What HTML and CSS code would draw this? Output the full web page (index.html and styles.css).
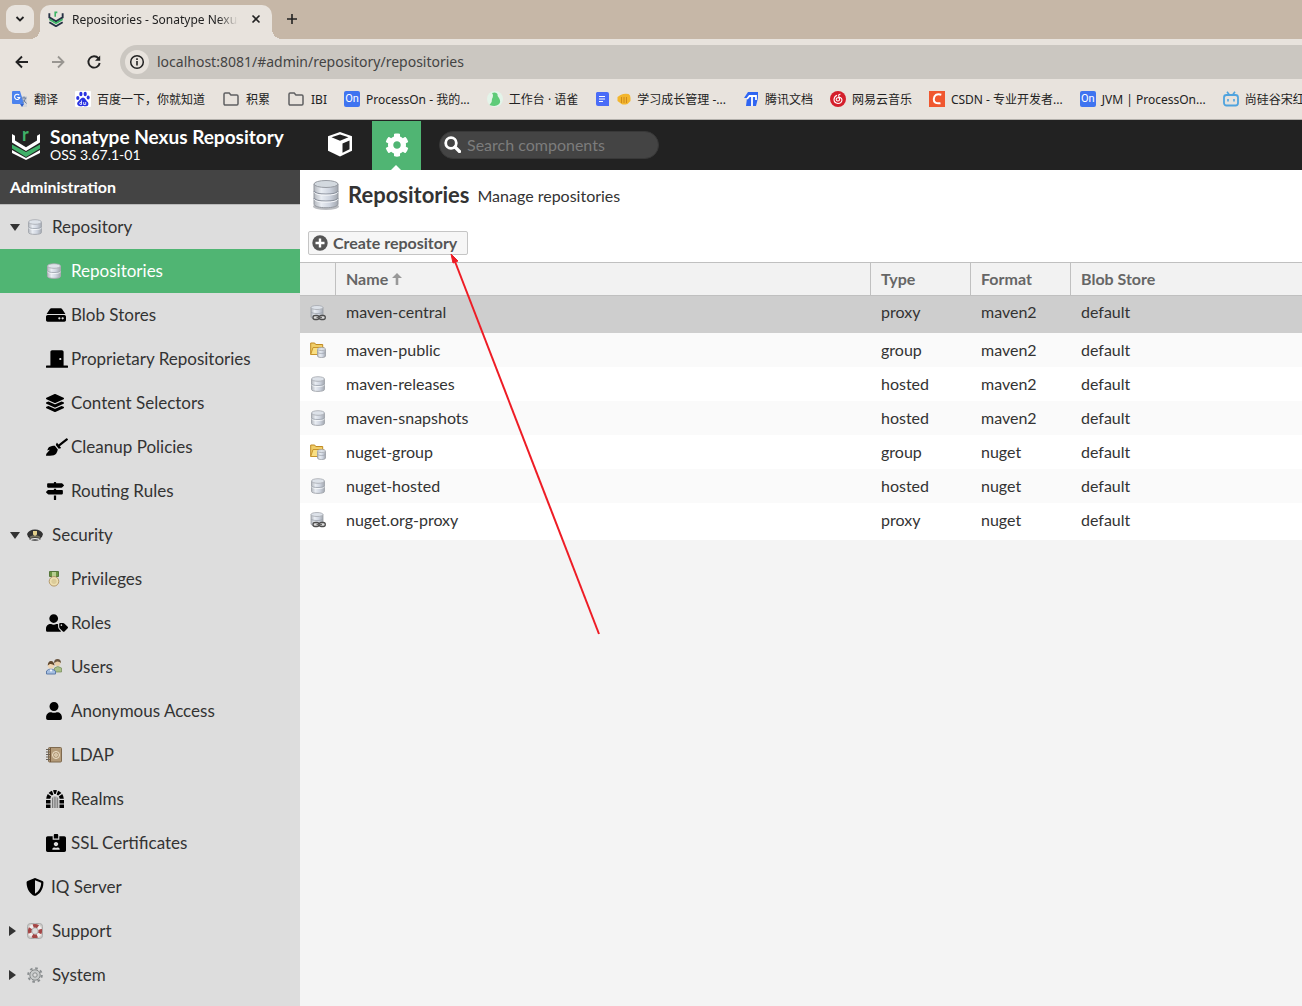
FILE: index.html
```html
<!DOCTYPE html>
<html lang="en">
<head>
<meta charset="utf-8">
<title>Repositories - Sonatype Nexus Repository</title>
<link rel="stylesheet" href="styles.css">
</head>
<body>
<svg class="sprite" aria-hidden="true">
  <defs>
    <linearGradient id="metal" x1="0" x2="1" y1="0" y2="0"><stop offset="0" stop-color="#b4b8be"/><stop offset=".3" stop-color="#e9edf3"/><stop offset=".65" stop-color="#ced4df"/><stop offset="1" stop-color="#a3a8b0"/></linearGradient>
    <symbol id="db" viewBox="0 0 16 16">
      <path d="M1.500 3v10.500c0 2.500 13 2.500 13 0V3" fill="url(#metal)" stroke="#a6aab0"/>
      <path d="M1.500 8.900c1 2 12 2 13 0" fill="none" stroke="#f7f9fb"/>
      <path d="M1.500 8c1 2 12 2 13 0" fill="none" stroke="#9ba1ab" stroke-width=".8"/>
      <ellipse cx="8" cy="3" rx="6.500" ry="2.300" fill="#dde2e9" stroke="#a4a8ae" stroke-width=".8"/>
    </symbol>
    <symbol id="db-proxy" viewBox="0 0 16 16">
      <path d="M1 2.500v9.500c0 2.500 12 2.500 12 0V2.500" fill="url(#metal)" stroke="#9a9ea5" stroke-width=".8"/>
      <path d="M1 7c1 2 11 2 12 0" fill="none" stroke="#9ba1ab" stroke-width=".8"/>
      <ellipse cx="7" cy="2.500" rx="6" ry="2" fill="#dde2e9" stroke="#a4a8ae" stroke-width=".8"/>
      <rect x="3" y="10.500" width="6" height="4" rx="2" fill="#ddd" stroke="#4c4c4c" stroke-width="1.300"/>
      <rect x="9.300" y="10.500" width="6" height="4" rx="2" fill="#ddd" stroke="#4c4c4c" stroke-width="1.300"/>
      <path d="M6.500 12.500h5.500" stroke="#666" stroke-width="1.300"/>
    </symbol>
    <symbol id="db-group" viewBox="0 0 16 16">
      <path d="M.700 12.500V1h4l1 1.500h7V6" fill="#f0cd68" stroke="#c08a22"/>
      <path d="M.700 12.500L3 5.500h11l-2 7z" fill="#f9df83" stroke="#c8952c"/>
      <path d="M7.500 7v7c0 2 8 2 8 0V7" fill="url(#metal)" stroke="#9a9ea5" stroke-width=".8"/>
      <ellipse cx="11.500" cy="7" rx="4" ry="1.500" fill="#dde2e9" stroke="#a4a8ae" stroke-width=".8"/>
      <path d="M7.500 10.500c1 1.300 7 1.300 8 0" fill="none" stroke="#9ba1ab" stroke-width=".7"/>
    </symbol>
    <symbol id="db-large" viewBox="0 0 28 32">
      <ellipse cx="14" cy="27.500" rx="13" ry="3.500" fill="#8d9197" opacity=".6"/>
      <path d="M2 5v20c0 5 24 5 24 0V5" fill="url(#metal)" stroke="#94989f"/>
      <path d="M2 12c1 4 23 4 24 0M2 19c1 4 23 4 24 0" fill="none" stroke="#8f95a0" stroke-width="1.200"/>
      <path d="M2 13.200c1 4 23 4 24 0M2 20.200c1 4 23 4 24 0" fill="none" stroke="#f5f7fa"/>
      <ellipse cx="14" cy="5" rx="12" ry="3.500" fill="#d3d9df" stroke="#989ca3"/>
    </symbol>
    <symbol id="hdd" viewBox="0 0 576 512"><path d="M576 304v96c0 26.510-21.490 48-48 48H48c-26.510 0-48-21.490-48-48v-96c0-26.510 21.490-48 48-48h480c26.510 0 48 21.490 48 48zm-48-80a79.557 79.557 0 0 1 30.777 6.165L462.250 85.374A48.003 48.003 0 0 0 422.311 64H153.689a48 48 0 0 0-39.938 21.374L17.223 230.165A79.557 79.557 0 0 1 48 224h480zm-48 96c-17.673 0-32 14.327-32 32s14.327 32 32 32 32-14.327 32-32-14.327-32-32-32zm-96 0c-17.673 0-32 14.327-32 32s14.327 32 32 32 32-14.327 32-32-14.327-32-32-32z"/></symbol>
    <symbol id="door" viewBox="0 0 640 512"><path d="M624 448H512V50.800C512 22.780 490.470 0 464 0H175.990c-26.470 0-48 22.780-48 50.800V448H16c-8.840 0-16 7.160-16 16v32c0 8.840 7.160 16 16 16h608c8.840 0 16-7.160 16-16v-32c0-8.840-7.160-16-16-16zM415.990 288c-17.670 0-32-14.330-32-32s14.330-32 32-32 32 14.330 32 32c.010 17.670-14.320 32-32 32z"/></symbol>
    <symbol id="layers" viewBox="0 0 512 512"><path d="M12.410 148.020l232.940 105.670c6.800 3.090 14.490 3.090 21.290 0l232.940-105.670c16.550-7.510 16.550-32.520 0-40.030L266.650 2.310a25.607 25.607 0 0 0-21.290 0L12.410 107.980c-16.550 7.510-16.550 32.530 0 40.040zm487.180 88.280l-58.090-26.330-161.640 73.270c-7.560 3.430-15.590 5.170-23.860 5.170s-16.290-1.740-23.860-5.170L70.510 209.970l-58.100 26.330c-16.550 7.500-16.550 32.500 0 40l232.940 105.590c6.800 3.080 14.490 3.080 21.290 0L499.590 276.300c16.550-7.500 16.550-32.500 0-40zm0 127.800l-57.870-26.230-161.860 73.370c-7.560 3.430-15.590 5.170-23.860 5.170s-16.290-1.740-23.860-5.170L70.290 337.870 12.410 364.100c-16.550 7.500-16.550 32.500 0 40l232.940 105.590c6.800 3.080 14.490 3.080 21.290 0L499.590 404.100c16.550-7.500 16.550-32.500 0-40z"/></symbol>
    <symbol id="broom" viewBox="0 0 640 512"><path d="M256.470 216.770l86.730 109.180s-16.600 102.360-76.570 150.120C206.660 523.850 0 510.190 0 510.190s3.800-23.140 11-55.430l94.620-112.170c3.970-4.700-.870-11.620-6.650-9.500l-60.400 22.090c14.440-41.660 32.720-80.040 54.600-97.470 59.970-47.760 163.300-40.940 163.300-40.940zM636.530 31.030l-19.860-25c-5.490-6.900-15.520-8.050-22.410-2.560l-232.480 177.800-34.140-42.970c-5.090-6.410-15.140-5.210-18.590 2.210l-25.330 54.550 86.730 109.180 58.800-12.450c8-1.690 11.420-11.200 6.340-17.600l-34.090-42.920 232.480-177.800c6.890-5.480 8.040-15.530 2.550-22.440z"/></symbol>
    <symbol id="signs" viewBox="0 0 512 512"><path d="M507.310 84.690L464 41.370c-6-6-14.140-9.370-22.630-9.370H288V16c0-8.840-7.160-16-16-16h-32c-8.840 0-16 7.160-16 16v16H56c-13.250 0-24 10.750-24 24v80c0 13.250 10.750 24 24 24h385.370c8.490 0 16.620-3.370 22.630-9.370l43.310-43.310c6.250-6.260 6.250-16.380 0-22.630zM224 496c0 8.840 7.160 16 16 16h32c8.840 0 16-7.160 16-16V384h-64v112zm232-272H288v-32h-64v32H70.630c-8.490 0-16.620 3.370-22.630 9.370L4.690 276.690c-6.250 6.250-6.250 16.380 0 22.630L48 342.630c6 6 14.140 9.370 22.630 9.370H456c13.250 0 24-10.750 24-24v-80c0-13.250-10.750-24-24-24z"/></symbol>
    <symbol id="user" viewBox="0 0 448 512"><path d="M224 256c70.700 0 128-57.300 128-128S294.700 0 224 0 96 57.300 96 128s57.300 128 128 128zm89.600 32h-16.700c-22.200 10.200-46.900 16-72.900 16s-50.600-5.800-72.900-16h-16.700C60.200 288 0 348.200 0 422.400V464c0 26.500 21.500 48 48 48h352c26.500 0 48-21.500 48-48v-41.600c0-74.200-60.200-134.400-134.400-134.400z"/></symbol>
    <symbol id="user-tag" viewBox="0 0 640 512"><path d="M630.600 364.900l-90.300-90.200c-12-12-28.300-18.700-45.300-18.700h-79.300c-17.700 0-32 14.300-32 32v79.200c0 17 6.700 33.200 18.700 45.200l90.300 90.200c12.500 12.500 32.800 12.500 45.300 0l92.500-92.500c12.600-12.500 12.600-32.700.100-45.200zm-182.800-21c-13.300 0-24-10.700-24-24s10.700-24 24-24 24 10.700 24 24c0 13.200-10.700 24-24 24zm-223.800-88c70.700 0 128-57.300 128-128C352 57.300 294.700 0 224 0S96 57.300 96 128c0 70.600 57.300 127.900 128 127.900zm127.800 111.200V294c-12.200-3.600-24.900-6.200-38.200-6.200h-16.700c-22.200 10.200-46.900 16-72.900 16s-50.600-5.800-72.900-16h-16.700c-74.200 0-134.400 60.200-134.400 134.400V464c0 26.500 21.500 48 48 48h352c15.500 0 29.100-7.500 37.900-18.900l-58-58c-18.100-18.100-28.100-42.200-28.100-67.900z"/></symbol>
    <symbol id="shield" viewBox="0 0 512 512"><path d="M466.500 83.700l-192-80a48.150 48.150 0 0 0-36.900 0l-192 80C27.700 91.100 16 108.600 16 128c0 198.500 114.500 335.700 221.500 380.300 11.800 4.900 25.100 4.900 36.900 0C360.100 472.600 496 349.300 496 128c0-19.400-11.700-36.900-29.500-44.300zM256.100 446.300l-.100-381 175.900 73.300c-3.300 151.400-82.100 261.100-175.800 307.700z"/></symbol>
    <symbol id="id-card" viewBox="0 0 576 512"><path d="M528 64H384v96H192V64H48C21.500 64 0 85.500 0 112v352c0 26.500 21.500 48 48 48h480c26.500 0 48-21.500 48-48V112c0-26.500-21.500-48-48-48zM288 224c35.300 0 64 28.700 64 64s-28.700 64-64 64-64-28.700-64-64 28.700-64 64-64zm93.300 224H194.700c-10.400 0-18.800-10-15.600-19.800 8.300-25.600 32.400-44.200 60.900-44.200h8.200c12.300 5.100 25.700 8 39.800 8s27.600-2.900 39.800-8h8.200c28.400 0 52.500 18.500 60.900 44.200 3.200 9.900-5.200 19.800-15.600 19.800zM352 32c0-17.700-14.300-32-32-32h-64c-17.700 0-32 14.300-32 32v96h128V32z"/></symbol>
    <symbol id="gate" viewBox="0 0 18 18">
      <path d="M0 10h4.500v3.500H0zM0 14.500h4.500V18H0zM13.500 10H18v3.500h-4.500zM13.500 14.500H18V18h-4.500zM.200 8.800A9 9 0 0 1 1.800 4l3.400 2.500a4.800 4.800 0 0 0-.8 2.300zM17.800 8.800A9 9 0 0 0 16.200 4l-3.400 2.500c.5.700.7 1.500.8 2.300zM2.600 3A9 9 0 0 1 5.900.7l1.500 3.700-1.500 1.100zM15.400 3A9 9 0 0 0 12.100.7l-1.500 3.700 1.500 1.100zM7 .300q2-.6 4 0L9.700 4H8.300z"/>
      <path d="M6.400 7.500V18M8.200 6.500V18M9.900 6.500V18M11.700 7.500V18" stroke="#555" stroke-width=".8"/>
    </symbol>
    <symbol id="cap" viewBox="0 0 16 16">
      <path d="M0 7q2-4.500 8-4.500T16 7q-.5 3-2.500 4v1.500q-5.500 2.500-11 0V11Q.500 10 0 7" fill="#333"/>
      <path d="M3 9.500q5-2.500 10 0v1.500q-5-1.500-10 0" fill="#77735f"/><path d="M3.500 12.300q4.500-1.500 9 0" stroke="#f2f2f2" stroke-width="1.300" fill="none"/>
      <path d="M6 4h4v3.500L8 9 6 7.500z" fill="#e3d08c"/>
    </symbol>
    <symbol id="medal" viewBox="0 0 16 16">
      <path d="M3.500 .500h9v5h-9z" fill="#6c9440" stroke="#56763a"/><path d="M6 1h4v5H6z" fill="#b9cf90"/>
      <circle cx="8" cy="10.300" r="4.800" fill="#eedfb0" stroke="#b59a6b"/><circle cx="8" cy="10.300" r="2.600" fill="#dbcb99"/>
    </symbol>
    <symbol id="people" viewBox="0 0 16 16">
      <path d="M8.500 13V9q3-3 7 0v4z" fill="#a9bf86" stroke="#738957" stroke-width=".7"/><circle cx="11.500" cy="4" r="3" fill="#e8cda7"/><path d="M8 4q0-4 3.500-4T15 4q-2-2-4-1.500z" fill="#6a5540"/>
      <path d="M.500 15v-3q4-4 9 0v3z" fill="#a6bfe1" stroke="#5d7ba8"/><circle cx="5" cy="6.500" r="3" fill="#f0d5b2"/><path d="M1.700 6.500Q2 2 5 2t3.500 4.500Q6 4.500 4 5z" fill="#60482f"/><path d="M3.500 10.500l1.500 2.500 1.500-2.500z" fill="#fff"/>
    </symbol>
    <symbol id="book" viewBox="0 0 16 16">
      <rect x="2.500" y=".500" width="13" height="14.500" rx="1" fill="#b39a78" stroke="#7f6a4f"/><path d="M4.500 1v14" stroke="#75583a"/><path d="M0 2.500h4M0 5h4M0 7.500h4M0 10h4M0 12.500h4" stroke="#6b6257"/>
      <circle cx="10" cy="8" r="3.500" fill="none" stroke="#efe1c8"/><circle cx="10" cy="8" r="1.300" fill="none" stroke="#efe1c8"/>
    </symbol>
    <symbol id="buoy" viewBox="0 0 16 16">
      <rect x=".500" y=".500" width="15" height="15" rx="3" fill="#d0cdca" stroke="#aaa"/><circle cx="8" cy="8" r="5.200" fill="none" stroke="#f1eeee" stroke-width="4"/>
      <circle cx="8" cy="8" r="5.200" fill="none" stroke="#a44645" stroke-width="3.800" stroke-dasharray="5 3.168" stroke-dashoffset="2.500"/><circle cx="8" cy="8" r="3.200" fill="#ddd" stroke="#999" stroke-width=".6"/>
    </symbol>
    <symbol id="gear-gray" viewBox="0 0 16 16">
      <circle cx="8" cy="8" r="6.800" fill="none" stroke="#8a8e90" stroke-width="2" stroke-dasharray="2.600 2.741"/>
      <circle cx="8" cy="8" r="5.200" fill="#c9cccc" stroke="#858989"/><circle cx="8" cy="8" r="2.200" fill="#ddd" stroke="#8a8e8e"/>
    </symbol>
    <symbol id="cog" viewBox="0 0 512 512"><path d="M487.400 315.700l-42.600-24.600c4.300-23.200 4.300-47 0-70.200l42.600-24.600c4.900-2.800 7.100-8.600 5.500-14-11.100-35.600-30-67.800-54.700-94.600-3.800-4.100-10-5.100-14.800-2.300L380.800 110c-17.900-15.400-38.500-27.300-60.800-35.100V25.800c0-5.600-3.900-10.500-9.400-11.700-36.700-8.200-74.300-7.800-109.200 0-5.500 1.200-9.400 6.100-9.400 11.700V75c-22.200 7.900-42.800 19.800-60.800 35.100L88.700 85.500c-4.900-2.800-11-1.900-14.800 2.300-24.700 26.700-43.600 58.900-54.700 94.600-1.700 5.400.6 11.200 5.500 14L67.300 221c-4.300 23.200-4.300 47 0 70.200l-42.600 24.600c-4.900 2.800-7.100 8.600-5.500 14 11.100 35.600 30 67.800 54.700 94.600 3.800 4.100 10 5.100 14.800 2.300l42.600-24.600c17.900 15.400 38.500 27.300 60.800 35.100v49.200c0 5.600 3.900 10.500 9.400 11.700 36.700 8.200 74.300 7.800 109.200 0 5.500-1.200 9.400-6.100 9.400-11.700v-49.200c22.200-7.900 42.800-19.800 60.800-35.100l42.600 24.600c4.900 2.800 11 1.900 14.800-2.300 24.700-26.700 43.600-58.900 54.700-94.600 1.500-5.500-.7-11.300-5.600-14.100zM256 336c-44.100 0-80-35.900-80-80s35.900-80 80-80 80 35.900 80 80-35.900 80-80 80z"/></symbol>
    <symbol id="folder" viewBox="0 0 16 16"><path d="M1 3.200q0-1.200 1.200-1.200h4l1.700 2h6Q15 4 15 5.200v7.600q0 1.200-1.200 1.200H2.200Q1 14 1 12.800z" fill="none" stroke="#5f6062" stroke-width="1.500"/></symbol>
  </defs>
</svg>

<header class="browser">
  <div class="tabstrip">
    <button class="tab-search" aria-label="Search tabs"><svg width="10" height="10" viewBox="0 0 10 10"><path d="M1.500 3L5 6.500 8.500 3" fill="none" stroke="#222" stroke-width="1.800"/></svg></button>
    <div class="tab">
      <svg width="16" height="16" viewBox="0 0 28 30"><path d="M1.500 4v8L14 19.500 26.500 12V4M1.500 21L14 28.500 26.500 21" fill="none" stroke="#243043" stroke-width="3.500"/><path d="M1.500 15.500L14 23l12.500-7.500M12.500 11V2.500h4" fill="none" stroke="#3cb565" stroke-width="3"/></svg>
      <span class="tab-title">Repositories - Sonatype Nexus Repository</span>
      <button class="icon-button" aria-label="Close tab"><svg width="10" height="10" viewBox="0 0 10 10"><path d="M1.500 1.500l7 7M8.500 1.500l-7 7" stroke="#222" stroke-width="1.600"/></svg></button>
    </div>
    <button class="icon-button" aria-label="New tab"><svg width="12" height="12" viewBox="0 0 12 12"><path d="M6 1v10M1 6h10" stroke="#222" stroke-width="1.600"/></svg></button>
  </div>
  <div class="toolbar">
    <button class="icon-button" aria-label="Back"><svg width="16" height="16" viewBox="0 0 16 16"><path d="M14 8H3M8 2.500L2.500 8 8 13.500" fill="none" stroke="#222" stroke-width="1.900"/></svg></button>
    <button class="icon-button" aria-label="Forward"><svg width="16" height="16" viewBox="0 0 16 16"><path d="M2 8h11M8 2.500L13.500 8 8 13.500" fill="none" stroke="#999691" stroke-width="1.800"/></svg></button>
    <button class="icon-button" aria-label="Reload"><svg width="16" height="16" viewBox="0 0 16 16"><path d="M13.700 9A5.700 5.700 0 1 1 12.500 4.300" fill="none" stroke="#222" stroke-width="1.900"/><path d="M14.200 1.500v5.200H9z" fill="#222"/></svg></button>
    <div class="address">
      <span class="site-info"><svg width="16" height="16" viewBox="0 0 16 16"><circle cx="8" cy="8" r="6.300" fill="none" stroke="#222" stroke-width="1.500"/><path d="M8 7v4.500M8 4.300v1.600" stroke="#222" stroke-width="1.600"/></svg></span>
      <input class="url" type="text" aria-label="Address" value="localhost:8081/#admin/repository/repositories">
    </div>
  </div>
  <nav class="bookmarks" aria-label="Bookmarks">
    <a href="#"><svg width="16" height="16" viewBox="0 0 16 16"><path d="M6 5h9v11h-5z" fill="#d5d7db"/><path d="M0 1q0-1 1-1h7l4 13H1q-1 0-1-1z" fill="#4c83ee"/><path d="M8 13h4l-2 3z" fill="#315fc5"/><path d="M7.200 4.200A2.600 2.600 0 1 0 7.700 6.500H5.200" fill="none" stroke="#fff" stroke-width="1.100"/><path d="M9.500 7h5M12 5.500V7M13.500 7q-1 4-3 5M11 8.500l3.500 4" stroke="#6a7d9c" fill="none"/></svg>翻译</a>
    <a href="#"><svg width="16" height="16" viewBox="0 0 16 16"><rect width="16" height="16" rx="1" fill="#fff"/><g fill="#2932e1"><ellipse cx="2.800" cy="7" rx="1.600" ry="2.100"/><ellipse cx="5.900" cy="3" rx="1.600" ry="2.200"/><ellipse cx="10.200" cy="3" rx="1.600" ry="2.200"/><ellipse cx="13.200" cy="6.500" rx="1.500" ry="2"/><path d="M8 6.500c2 0 3 3 4.500 4.300s1.300 4.700-1.500 4.500-2-.4-3-.4-1 .5-3 .4-4-2.500-2-4.500S6 6.500 8 6.500"/></g><path d="M6.500 9.500v4h-1.300q-1-1 0-2h1.300M8.700 11v2.500h2V11" fill="none" stroke="#fff" stroke-width=".8"/></svg>百度一下，你就知道</a>
    <a href="#"><svg width="18" height="16"><use href="#folder"/></svg>积累</a>
    <a href="#"><svg width="18" height="16"><use href="#folder"/></svg>IBI</a>
    <a href="#"><span class="on-badge">On</span>ProcessOn - 我的...</a>
    <a href="#"><svg width="16" height="16" viewBox="0 0 16 16"><circle cx="8" cy="8" r="8" fill="#e3f4e9"/><path d="M5 2q4-1.500 5.500 1Q10 5.500 12 7q2.500 4-.5 6.500-3 2.500-9 .5 3-3 2.500-6Q7 4 5 2" fill="#5ecb78"/></svg>工作台 · 语雀</a>
    <a href="#"><svg width="16" height="16" viewBox="0 0 16 16"><path d="M2 1h10q2 0 2 2v12H3q-2 0-2-2V2z" fill="#4a6cf7"/><path d="M4 5.500h6M4 8h6M4 10.500h4" stroke="#fff"/></svg><svg width="14" height="12" viewBox="0 0 13 12"><path d="M0 4l3-2q4-2 8-1 2 1 2 4v3l-3 3q-4 1-6 0L0 8z" fill="#f3b62d"/><path d="M4 4v6M6.500 4v6M9 4v6" stroke="#c57f18" stroke-width=".8"/></svg>学习成长管理 -...</a>
    <a href="#"><svg width="16" height="16" viewBox="0 0 16 16"><path d="M5 1h10v6l-2 8H3l1-8H1z" fill="#2f65f2"/><path d="M9 5v10M4 8l2.500-3H13v4" stroke="#fff" stroke-width="1.800" fill="none"/></svg>腾讯文档</a>
    <a href="#"><svg width="16" height="16" viewBox="0 0 16 16"><circle cx="8" cy="8" r="8" fill="#d41f2b"/><path d="M10.500 3.200Q8.300 3 8.800 5l.8 3.500a1.700 1.700 0 1 1-2-1.800q4-1.200 4.400 2.300Q11.500 12.500 8 12.500 4 12 4 8.500 4.200 5.500 7 4.300" fill="none" stroke="#fff" stroke-width="1.100"/></svg>网易云音乐</a>
    <a href="#"><svg width="16" height="16" viewBox="0 0 16 16"><rect width="16" height="16" fill="#f0572f"/><path d="M12.300 3.700q-7-1.700-7.500 4.500-.2 5 6.700 4" fill="none" stroke="#fff" stroke-width="2"/></svg>CSDN - 专业开发者...</a>
    <a href="#"><span class="on-badge">On</span>JVM | ProcessOn...</a>
    <a href="#"><svg width="16" height="16" viewBox="0 0 16 16"><rect x="1" y="4" width="14" height="10.500" rx="2.500" fill="none" stroke="#4fa3de" stroke-width="1.800"/><path d="M4 .8L6.500 4M12 .8L9.500 4M5 8v2.500M11 8v2.500" stroke="#4fa3de" stroke-width="1.600"/></svg>尚硅谷宋红康</a>
  </nav>
</header>

<div class="app">
  <header class="app-header">
    <svg class="logo" width="28" height="30" viewBox="0 0 28 30"><path d="M0 4l3 1.800v4.700l11 6.700 11-6.700V5.800L28 4v8.500L14 21 0 12.500zM0 20l14 8 14-8v3L14 30 0 23z" fill="#fff"/><path d="M0 14.500L14 22l14-7.500v4L14 27 0 18.500z" fill="#3fb068"/><text x="10" y="11" class="logo-letter">r</text></svg>
    <div class="brand"><strong>Sonatype Nexus Repository</strong><span>OSS 3.67.1-01</span></div>
    <button class="mode" aria-label="Browse"><svg width="26" height="26" viewBox="0 0 26 26"><path d="M13 1l12 4.300v14.500L13 25.500 1 19.800V5.300z" fill="#fff"/><path d="M4.500 6.300L13 3.500l8.500 2.800L13 9.700zM15.500 12.500l7-3v8.700l-7 3.500z" fill="#222"/></svg></button>
    <button class="mode mode-active" aria-label="Administration"><svg width="24" height="24" fill="#fff"><use href="#cog"/></svg></button>
    <label class="search"><svg width="17" height="17" viewBox="0 0 17 17"><circle cx="7" cy="7" r="5.300" fill="none" stroke="#fff" stroke-width="2.800"/><path d="M11 11l4.500 4.500" stroke="#fff" stroke-width="3.200" stroke-linecap="round"/></svg><input type="text" aria-label="Search components" placeholder="Search components"></label>
  </header>

  <aside class="sidebar">
    <h2>Administration</h2>
    <nav>
      <a class="top" href="#"><i class="tri open"></i><svg width="16" height="16"><use href="#db"/></svg>Repository</a>
      <a class="child selected" href="#"><span><svg width="16" height="16"><use href="#db"/></svg></span>Repositories</a>
      <a class="child" href="#"><span><svg width="20" height="18"><use href="#hdd"/></svg></span>Blob Stores</a>
      <a class="child" href="#"><span><svg width="22" height="18"><use href="#door"/></svg></span>Proprietary Repositories</a>
      <a class="child" href="#"><span><svg width="18" height="18"><use href="#layers"/></svg></span>Content Selectors</a>
      <a class="child" href="#"><span><svg width="22" height="18"><use href="#broom"/></svg></span>Cleanup Policies</a>
      <a class="child" href="#"><span><svg width="18" height="18"><use href="#signs"/></svg></span>Routing Rules</a>
      <a class="top" href="#"><i class="tri open"></i><svg width="16" height="16"><use href="#cap"/></svg>Security</a>
      <a class="child" href="#"><span><svg width="16" height="16"><use href="#medal"/></svg></span>Privileges</a>
      <a class="child" href="#"><span><svg width="22" height="18"><use href="#user-tag"/></svg></span>Roles</a>
      <a class="child" href="#"><span><svg width="16" height="16"><use href="#people"/></svg></span>Users</a>
      <a class="child" href="#"><span><svg width="16" height="18"><use href="#user"/></svg></span>Anonymous Access</a>
      <a class="child" href="#"><span><svg width="16" height="16"><use href="#book"/></svg></span>LDAP</a>
      <a class="child" href="#"><span><svg width="18" height="18"><use href="#gate"/></svg></span>Realms</a>
      <a class="child" href="#"><span><svg width="20" height="18"><use href="#id-card"/></svg></span>SSL Certificates</a>
      <a class="top wide-icon" href="#"><i class="tri"></i><svg width="18" height="18"><use href="#shield"/></svg>IQ Server</a>
      <a class="top" href="#"><i class="tri closed"></i><svg width="16" height="16"><use href="#buoy"/></svg>Support</a>
      <a class="top" href="#"><i class="tri closed"></i><svg width="16" height="16"><use href="#gear-gray"/></svg>System</a>
    </nav>
  </aside>

  <main class="content">
    <div class="title"><svg width="28" height="32"><use href="#db-large"/></svg><h1>Repositories</h1><p>Manage repositories</p></div>
    <div class="actions"><button class="create"><svg width="16" height="16" viewBox="0 0 16 16"><circle cx="8" cy="8" r="7.700" fill="#555"/><path d="M8 3.500v9M3.500 8h9" stroke="#fff" stroke-width="2.400"/></svg><span>Create repository</span></button></div>
    <table>
      <colgroup><col class="c-icon"><col class="c-name"><col class="c-kind"><col class="c-kind"><col></colgroup>
      <thead><tr><th aria-label="Icon"></th><th>Name <svg width="10" height="12" viewBox="0 0 10 12"><path d="M5 0l5 5H6.300v7H3.700V5H0z" fill="#999"/></svg></th><th>Type</th><th>Format</th><th>Blob Store</th></tr></thead>
      <tbody>
        <tr class="current"><td><svg width="16" height="16"><use href="#db-proxy"/></svg></td><td>maven-central</td><td>proxy</td><td>maven2</td><td>default</td></tr>
        <tr><td><svg width="16" height="16"><use href="#db-group"/></svg></td><td>maven-public</td><td>group</td><td>maven2</td><td>default</td></tr>
        <tr><td><svg width="16" height="16"><use href="#db"/></svg></td><td>maven-releases</td><td>hosted</td><td>maven2</td><td>default</td></tr>
        <tr><td><svg width="16" height="16"><use href="#db"/></svg></td><td>maven-snapshots</td><td>hosted</td><td>maven2</td><td>default</td></tr>
        <tr><td><svg width="16" height="16"><use href="#db-group"/></svg></td><td>nuget-group</td><td>group</td><td>nuget</td><td>default</td></tr>
        <tr><td><svg width="16" height="16"><use href="#db"/></svg></td><td>nuget-hosted</td><td>hosted</td><td>nuget</td><td>default</td></tr>
        <tr><td><svg width="16" height="16"><use href="#db-proxy"/></svg></td><td>nuget.org-proxy</td><td>proxy</td><td>nuget</td><td>default</td></tr>
      </tbody>
    </table>
    <svg class="pointer" width="152" height="384" viewBox="0 0 152 384" aria-hidden="true"><path d="M4 5l145 375" stroke="#ee1c25" stroke-width="2"/><path d="M1 0l7 7-5 2z" fill="#ee1c25" stroke="#ee1c25"/></svg>
  </main>
</div>
</body>
</html>
```
FILE: styles.css
```css
*, *::before, *::after { box-sizing: border-box; }
body {
  margin: 0;
  min-height: 100vh;
  display: flex;
  flex-direction: column;
  overflow-x: hidden;
  background: #f4f4f4;
  color: #333;
  font-family: Lato, "Open Sans", sans-serif;
  font-size: 16px;
}
svg { display: block; flex: none; }
a { color: inherit; text-decoration: none; }
button { border: 0; padding: 0; background: none; font: inherit; color: inherit; }
input { border: 0; padding: 0; background: none; font: inherit; outline: 0; min-width: 0; }
.sprite { position: absolute; width: 0; height: 0; }

/* Browser frame */
.browser {
  background: #e8e3dd;
  border-bottom: 1px solid #b3b0ab;
  font-family: "Noto Sans", "Noto Sans CJK SC", sans-serif;
  font-size: 12px;
  color: #222;
}
.icon-button { display: grid; place-items: center; width: 20px; height: 20px; }
.tabstrip { display: flex; align-items: center; height: 39px; padding: 0 0 1px 6px; background: #c6b7a7; }
.tab-search { display: grid; place-items: center; width: 28px; height: 28px; border-radius: 9px; background: #e8e3dd; }
.tab {
  position: relative;
  display: flex;
  align-items: center;
  align-self: flex-end;
  width: 232px;
  height: 34px;
  margin: 0 10px -1px 6px;
  padding: 0 6px 6px 8px;
  gap: 8px;
  border-radius: 10px 10px 0 0;
  background: #e8e3dd;
}
.tab::before, .tab::after { content: ""; position: absolute; bottom: 0; width: 10px; height: 10px; }
.tab::before { right: 100%; background: radial-gradient(circle at 0 0, transparent 10px, #e8e3dd 10px); }
.tab::after { left: 100%; background: radial-gradient(circle at 100% 0, transparent 10px, #e8e3dd 10px); }
.tab-title {
  flex: 1;
  overflow: hidden;
  white-space: nowrap;
  -webkit-mask-image: linear-gradient(90deg, #000 88%, transparent);
  mask-image: linear-gradient(90deg, #000 88%, transparent);
}
.toolbar { display: flex; align-items: center; height: 46px; padding-left: 12px; gap: 16px; }
.address {
  display: flex;
  align-items: center;
  flex: 1;
  height: 34px;
  padding-left: 5px;
  gap: 8px;
  border-radius: 17px 0 0 17px;
  background: #cbc7c1;
}
.site-info { display: grid; place-items: center; width: 24px; height: 24px; border-radius: 50%; background: #e8e3dd; }
.url { flex: 1; padding-bottom: 2px; font-size: 14px; color: #444; }
.bookmarks { display: flex; align-items: center; height: 34px; padding: 0 0 6px 12px; gap: 17px; overflow: hidden; white-space: nowrap; }
.bookmarks a { display: flex; align-items: center; gap: 6px; }
.on-badge { width: 16px; border-radius: 2px; background: #3f74f0; color: #fff; font: 11px/16px Roboto, sans-serif; text-align: center; }

/* Application */
.app { flex: 1; display: grid; grid-template-columns: 300px 1fr; grid-template-rows: 50px 1fr; }
.app-header { grid-column: 1 / 3; display: flex; align-items: center; padding-left: 12px; background: #222; color: #fff; }
.logo { overflow: visible; }
.logo-letter { font: bold 18px Lato, sans-serif; fill: #3fb068; }
.brand { display: flex; flex-direction: column; width: 265px; margin-left: 10px; font-size: 14px; line-height: 16px; white-space: nowrap; }
.brand strong { font-size: 19px; line-height: 20px; }
.mode { display: grid; place-items: center; width: 49px; height: 50px; padding-bottom: 2px; }
.mode-active { position: relative; margin-left: 8px; border-top: 1px solid #222; background: #50b573; }
.mode-active::after {
  content: "";
  position: absolute;
  bottom: 0;
  left: 19px;
  border: 5px solid transparent;
  border-top: 0;
  border-bottom-color: #fff;
}
.search {
  display: flex;
  align-items: center;
  width: 220px;
  height: 28px;
  margin-left: 18px;
  padding: 0 10px 2px 4px;
  gap: 6px;
  border: 1px solid #383838;
  border-radius: 14px;
  background: #444;
}
.search input { flex: 1; color: #fff; }
.search input::placeholder { color: #7c7c7c; }

.sidebar { background: #ddd; font-size: 17px; }
.sidebar h2 { margin: 0; height: 35px; padding-left: 10px; border-bottom: 1px solid #bbb; background: #444; color: #fff; font-size: 16px; line-height: 34px; }
.sidebar a { display: flex; align-items: center; height: 44px; padding-bottom: 2px; }
.sidebar svg, .tri { margin-top: 2px; }
.top { padding-left: 8px; }
.top svg { margin-right: 9px; margin-left: 1px; }
.wide-icon svg { margin-right: 7px; margin-left: 0; }
.tri { width: 18px; flex: none; }
.open::before { content: ""; display: block; width: 10px; margin-left: 2px; border: 5px solid transparent; border-top: 7px solid #333; border-bottom: 0; }
.closed::before { content: ""; display: block; width: 7px; margin-left: 1px; border: 5px solid transparent; border-left: 7px solid #333; border-right: 0; }
.child { padding-left: 46px; }
.child span { width: 25px; flex: none; }
.selected { background: #50b573; color: #fff; }

.content { position: relative; min-width: 0; }
.title { display: flex; align-items: center; height: 52px; padding: 0 12px 2px; background: #fff; }
.title h1 { margin: 0 8px; padding-bottom: 2px; font-size: 22px; }
.title p { margin: 0; }
.actions { padding: 9px 8px 7px; background: #fff; }
.create { display: flex; align-items: center; width: 160px; height: 24px; padding-left: 3px; gap: 5px; border: 1px solid #c5c5c5; border-radius: 2px; background: #f6f6f6; color: #555; font-weight: bold; white-space: nowrap; }
.create span { padding-bottom: 2px; }
table { width: 100%; table-layout: fixed; border-collapse: separate; border-spacing: 0; background: #fff; }
.c-icon { width: 35px; }
.c-name { width: 535px; }
.c-kind { width: 100px; }
th { height: 34px; padding: 0 10px 1px; border: 1px solid #c0c0c0; border-width: 1px 0 1px 1px; background: #f2f2f2; color: #666; text-align: left; }
th:first-child { border-left: 0; }
th svg { display: inline-block; }
td { height: 34px; padding: 0 11px 2px; }
td:first-child { padding: 0 10px; }
.current td { height: 37px; padding-bottom: 6px; background: #cecece; }
.current td:first-child { padding-bottom: 3px; }
tbody tr:nth-child(even) { background: #fafafa; }
tbody tr:last-child td { height: 37px; padding-bottom: 5px; }
tbody tr:last-child td:first-child { padding-bottom: 3px; }
.pointer { position: absolute; left: 150px; top: 84px; }
```
